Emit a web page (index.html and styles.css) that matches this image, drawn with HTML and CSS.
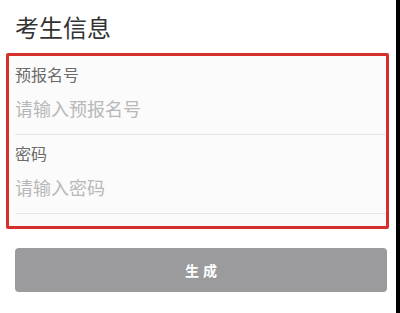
FILE: index.html
```html
<!DOCTYPE html>
<html lang="zh-CN">
<head>
<meta charset="utf-8">
<title>考生信息</title>
<link rel="stylesheet" href="styles.css">
</head>
<body>
<div class="page">
  <main class="content">
    <h1 class="title">考生信息</h1>
    <form class="form-box">
      <div class="field">
        <label class="field-label" for="regno">预报名号</label>
        <input class="field-input" id="regno" type="text" placeholder="请输入预报名号">
      </div>
      <div class="field">
        <label class="field-label" for="pwd">密码</label>
        <input class="field-input" id="pwd" type="password" placeholder="请输入密码">
      </div>
    </form>
    <button class="submit-btn" type="button">生成</button>
  </main>
  <div class="edge-bar"></div>
</div>
</body>
</html>
```

FILE: styles.css
```css
html, body {
  margin: 0;
  padding: 0;
  background: #ffffff;
}

body {
  font-family: "Noto Sans CJK SC", "Noto Sans", sans-serif;
}

.page {
  display: flex;
  width: 400px;
  height: 313px;
}

.content {
  flex: 1;
  display: flex;
  flex-direction: column;
}

.edge-bar {
  width: 4px;
  background: #000000;
}

.title {
  margin: 11px 0 0 15px;
  font-size: 24px;
  line-height: 32px;
  font-weight: 400;
  color: #333333;
}

.form-box {
  margin: 10px 7px 0 6px;
  border: 3px solid #d5302b;
  border-radius: 2px;
  background: #fbfbfb;
  padding: 0 0 12px 6px;
  display: flex;
  flex-direction: column;
}

.field {
  display: flex;
  flex-direction: column;
  gap: 12px;
  padding: 8px 0 14px 0;
  border-bottom: 1px solid #e6e6e6;
}

.field-label {
  font-size: 16px;
  line-height: 20px;
  color: #6a6a6a;
}

.field-input {
  border: none;
  outline: none;
  background: transparent;
  padding: 0;
  margin: 0;
  height: 24px;
  font-family: "Noto Sans CJK SC", "Noto Sans", sans-serif;
  font-size: 18px;
  line-height: 24px;
  color: #333333;
}

.field-input::placeholder {
  color: #b8b8b8;
}

.submit-btn {
  margin: 19px 9px 0 15px;
  height: 44px;
  border: none;
  border-radius: 4px;
  background: #9b9a9c;
  color: #ffffff;
  font-family: "Noto Sans CJK SC", "Noto Sans", sans-serif;
  font-size: 14px;
  font-weight: 700;
  letter-spacing: 4px;
  text-indent: 4px;
  padding: 0;
}
```
